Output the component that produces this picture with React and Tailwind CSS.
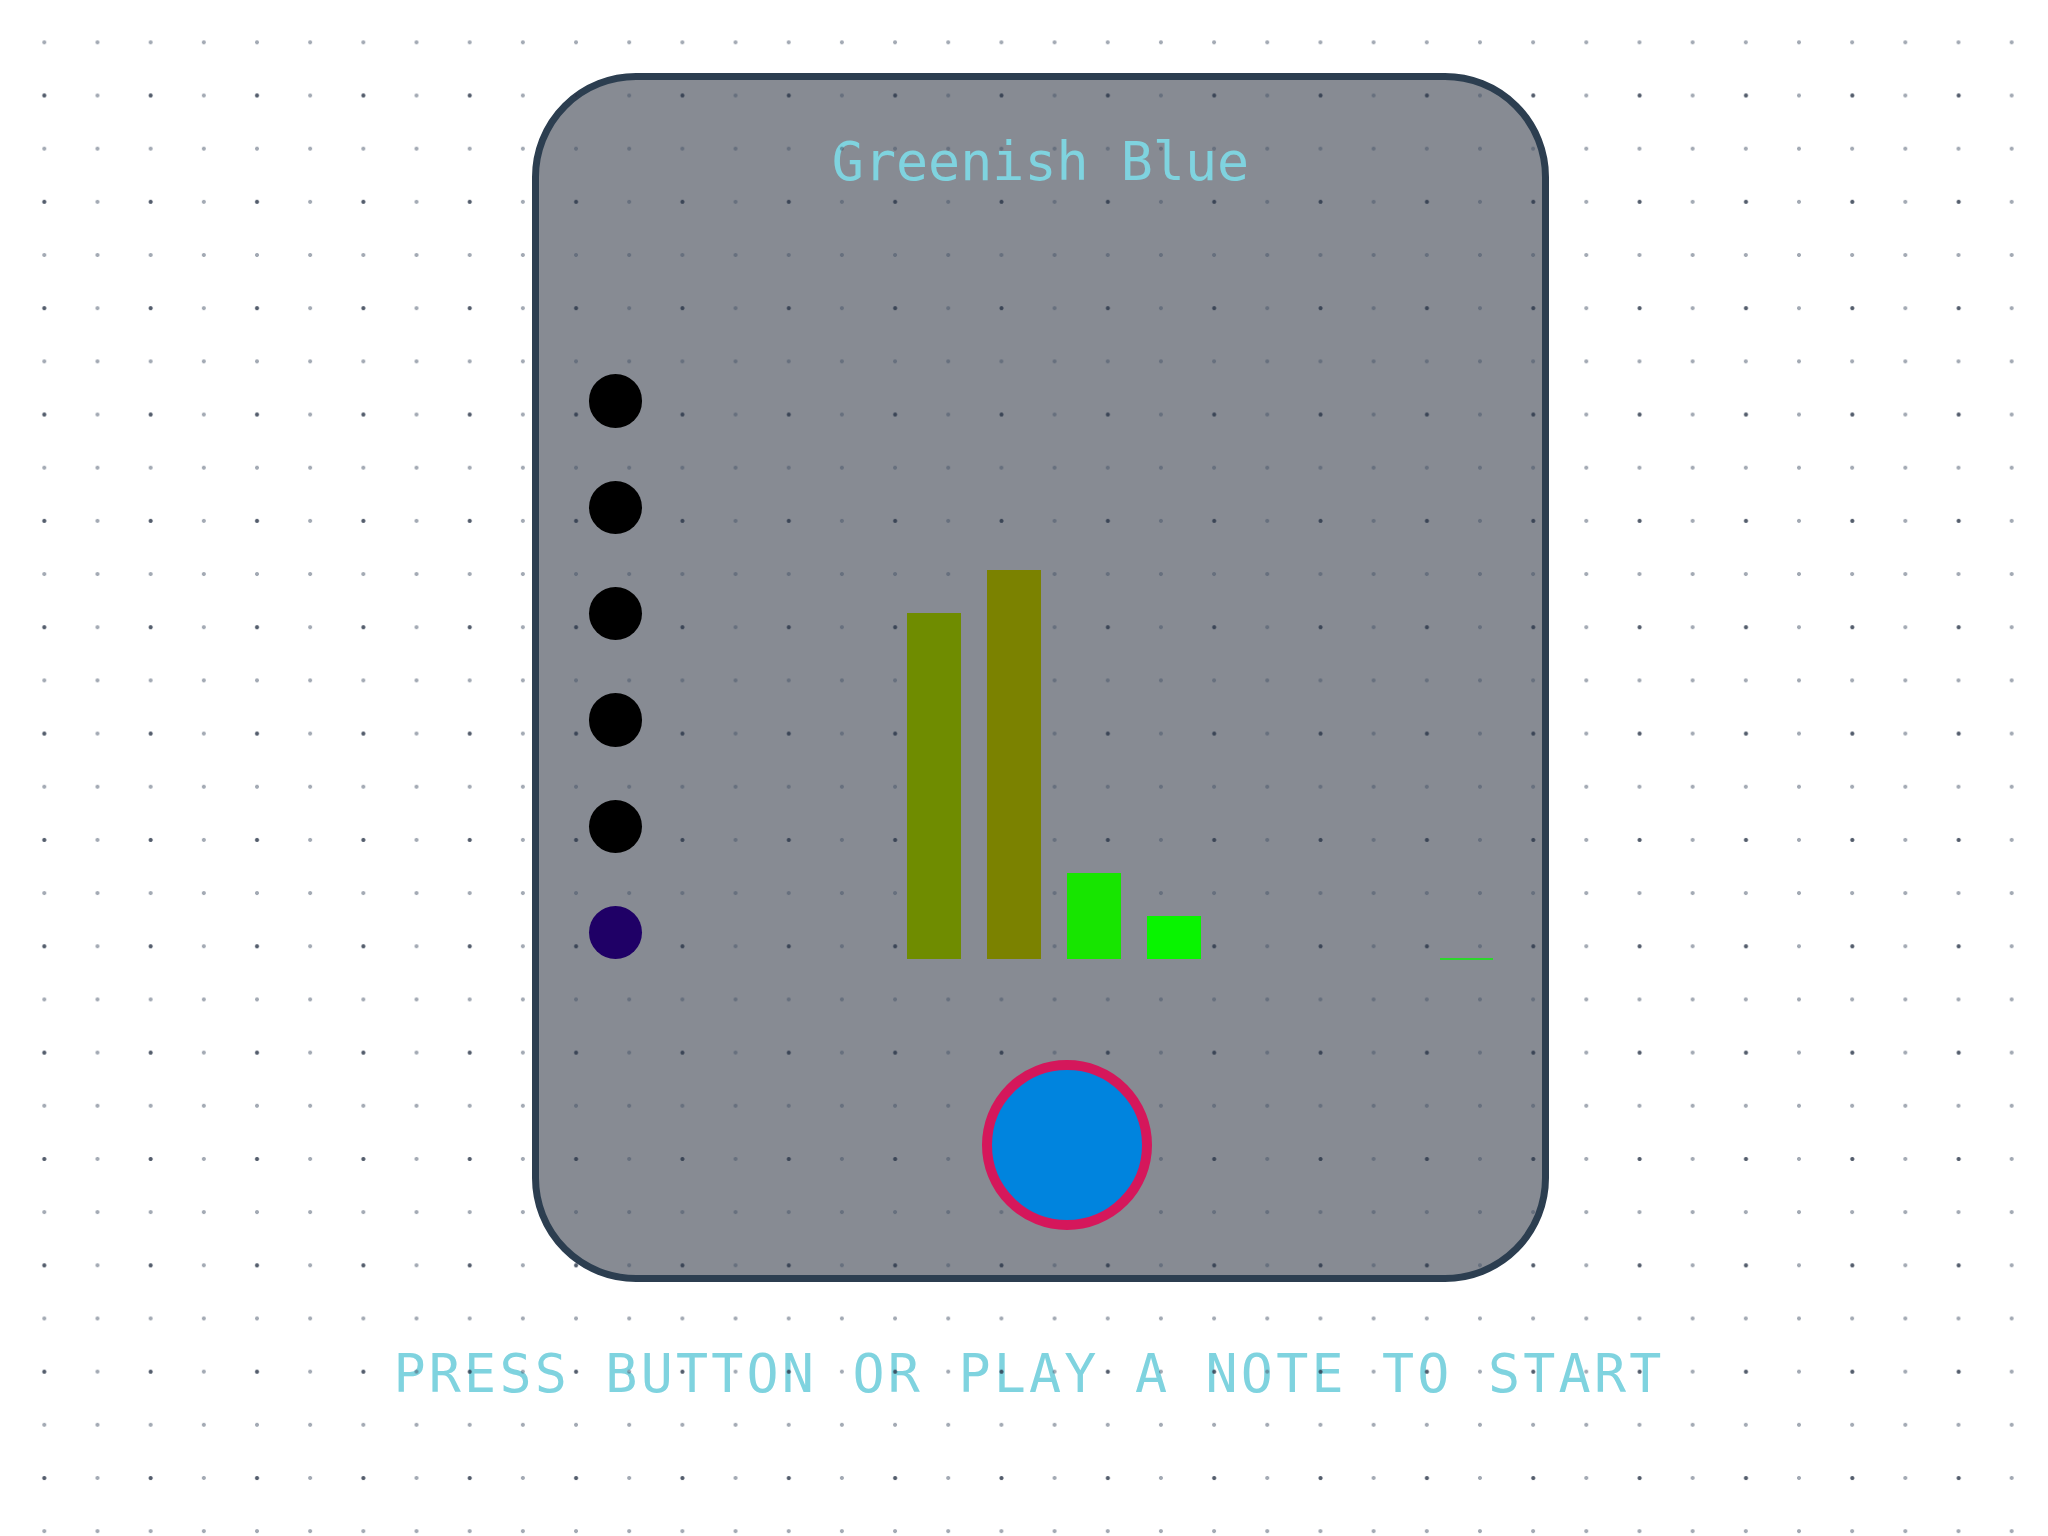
const bars = [
  { h: "h-[346px]", c: "bg-[#6f8c00]" },
  { h: "h-[389px]", c: "bg-[#7b8200]" },
  { h: "h-[86px]", c: "bg-[#17e500]" },
  { h: "h-[43px]", c: "bg-[#08f400]" },
];

const lights = ["bg-black", "bg-black", "bg-black", "bg-black", "bg-black", "bg-[#1f0066]"];

export default function App() {
  return (
    <div className="relative min-h-screen w-full overflow-hidden bg-white font-['DejaVu_Sans_Mono',monospace] text-[#7fd3df]">
      <div className="flex flex-col items-center pt-[73px]">
        {/* tuner card */}
        <div className="ml-[33px] flex h-[1209px] w-[1017px] flex-col rounded-[104px] border-[7px] border-[#2c3e50] bg-[#878b93]">
          <h1 className="mt-[55px] text-center text-[53.33px] font-normal leading-none">Greenish Blue</h1>

          <div className="mt-[186px] flex items-end">
            <div className="ml-[50px] flex flex-col gap-[53px]">
              {lights.map((c, i) => (
                <div key={i} className={`relative z-10 h-[53.33px] w-[53.33px] rounded-full ${c}`} />
              ))}
            </div>

            <div className="ml-[265px] flex items-end gap-[26.67px]">
              {bars.map((b, i) => (
                <div key={i} className={`relative z-10 w-[53.33px] ${b.h} ${b.c}`} />
              ))}
            </div>

            <div className="relative z-10 mb-[-1px] ml-[239px] h-[2px] w-[53px] bg-[#2bd62b]" />
          </div>

          <button
            type="button"
            className="relative z-10 mt-[101px] ml-[443px] h-[170px] w-[170px] self-start rounded-full border-[10.5px] border-[#d5175b] bg-[#0084de]"
          />
        </div>

        <p className="mt-[65px] ml-[10px] text-center text-[53.33px] leading-none tracking-[3.2px]">
          PRESS BUTTON OR PLAY A NOTE TO START
        </p>
      </div>

      {/* dotted grid, drawn over the page */}
      <div className="pointer-events-none absolute inset-0 [background-image:radial-gradient(circle_at_44.3px_95.5px,rgba(30,41,59,0.6)_1.6px,transparent_2.3px),radial-gradient(circle_at_44.3px_42.3px,rgba(71,85,105,0.5)_1.6px,transparent_2.3px)] [background-size:106.36px_106.36px,53.18px_53.18px]" />
    </div>
  );
}
